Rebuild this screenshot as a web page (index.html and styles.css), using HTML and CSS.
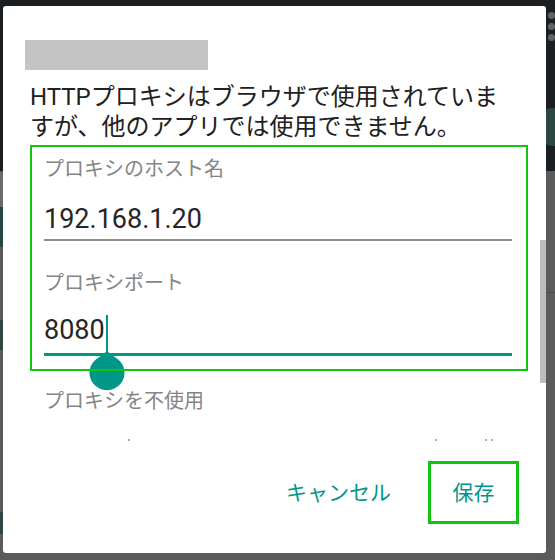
FILE: index.html
```html
<!DOCTYPE html>
<html lang="ja">
<head>
<meta charset="utf-8">
<title>プロキシ</title>
<link rel="stylesheet" href="styles.css">
</head>
<body>
<div class="screen">
  <div class="bg-dots"><span></span><span></span><span></span></div>
  <div class="bg-fab"></div>
  <div class="bg-left-a"></div>
  <div class="bg-left-b"></div>
  <div class="bg-left-c"></div>
  <div class="bg-left-d"></div>
  <div class="bg-line"></div>

  <div class="dialog">
    <div class="title-ph"></div>
    <p class="message">HTTPプロキシはブラウザで使用されていますが、他のアプリでは使用できません。</p>

    <div class="form-box">
      <div class="field">
        <div class="label">プロキシのホスト名</div>
        <div class="value host">192.168.1.20</div>
      </div>
      <div class="field port">
        <div class="label">プロキシポート</div>
        <div class="value focused">8080</div>
      </div>
      <div class="cursor"></div>
      <svg class="handle" viewBox="0 0 36 40" width="36" height="40">
        <path d="M18 0 L26 6.2 A17.5 17.5 0 1 1 10 6.2 Z" fill="#009688"/>
      </svg>
    </div>

    <div class="label bypass">プロキシを不使用</div>
    <div class="cut-row"><i class="d1"></i><i class="d2"></i><i class="d3"></i><i class="d4"></i></div>

    <div class="actions">
      <span class="btn cancel">キャンセル</span>
      <span class="btn save">保存</span>
    </div>
    <div class="scrollbar"></div>
  </div>
</div>
</body>
</html>
```

FILE: styles.css
```css
html, body {
  margin: 0;
  padding: 0;
}
body {
  font-family: Roboto, "Noto Sans CJK JP", sans-serif;
  background: #5a5a5a;
}
.screen {
  position: relative;
  width: 555px;
  height: 560px;
  overflow: hidden;
  background: linear-gradient(#1b1f22 0, #1b1f22 171px, #5b5b5b 171px);
  display: flex;
  flex-direction: column;
}
.bg-dots {
  position: absolute;
  left: 548px;
  top: 12px;
  display: flex;
  flex-direction: column;
  gap: 4px;
}
.bg-dots span {
  width: 7px;
  height: 7px;
  border-radius: 50%;
  background: #5f6366;
}
.bg-fab {
  position: absolute;
  left: 534px;
  top: 108px;
  width: 38px;
  height: 38px;
  border-radius: 50%;
  background: #2c4643;
}
.bg-left-a {
  position: absolute;
  left: 0;
  top: 172px;
  width: 3px;
  height: 40px;
  background: #6a6a6a;
}
.bg-left-b {
  position: absolute;
  left: 0;
  top: 207px;
  width: 3px;
  height: 40px;
  background: #264543;
}
.bg-left-c {
  position: absolute;
  left: 0;
  top: 320px;
  width: 3px;
  height: 30px;
  background: #2f4644;
}
.bg-left-d {
  position: absolute;
  left: 0;
  top: 512px;
  width: 3px;
  height: 22px;
  background: #2f4644;
}
.bg-line {
  position: absolute;
  left: 546px;
  top: 292px;
  width: 9px;
  height: 1px;
  background: #4a4a4a;
}

.dialog {
  position: relative;
  margin: 6px 0 0 3px;
  width: 543px;
  height: 547px;
  background: #ffffff;
  border-radius: 3px;
  box-sizing: border-box;
  padding-top: 34px;
  display: flex;
  flex-direction: column;
}
.title-ph {
  margin-left: 22px;
  width: 183px;
  height: 30px;
  background: #c4c4c4;
}
.message {
  margin: 12px 0 0 27px;
  width: 480px;
  font-size: 24px;
  line-height: 30px;
  color: #212121;
}
.form-box {
  position: relative;
  margin: 3px 0 0 27px;
  width: 498px;
  height: 226px;
  box-sizing: border-box;
  padding: 10px 16px 0 14px;
}
.form-box::after {
  content: "";
  position: absolute;
  inset: 0;
  border: 2px solid #12c312;
  z-index: 3;
  pointer-events: none;
}
.label {
  font-size: 20px;
  line-height: 28px;
  color: #858585;
}
.value {
  margin-top: 18px;
  font-size: 27px;
  line-height: 36px;
  color: #262626;
  padding-bottom: 2px;
  border-bottom: 2px solid #8e8e8e;
}
.port {
  margin-top: 28px;
}
.port .value {
  margin-top: 15px;
  padding-bottom: 5px;
  border-bottom: 3px solid #009688;
}
.cursor {
  position: absolute;
  left: 76px;
  top: 170px;
  width: 2px;
  height: 40px;
  background: #009688;
}
.handle {
  position: absolute;
  left: 59px;
  top: 206px;
  z-index: 2;
}
.bypass {
  margin: 16px 0 0 41px;
}
.cut-row {
  position: relative;
  height: 2px;
  margin-top: 24px;
}
.cut-row i {
  position: absolute;
  top: 0;
  width: 2px;
  height: 2px;
  background: #b0b0b0;
}
.cut-row .d1 { left: 125px; }
.cut-row .d2 { left: 432px; }
.cut-row .d3 { left: 482px; }
.cut-row .d4 { left: 488px; }

.actions {
  margin-top: 20px;
  margin-right: 27px;
  display: flex;
  justify-content: flex-end;
  align-items: center;
  gap: 37px;
}
.btn {
  font-size: 21px;
  line-height: 28px;
  color: #009688;
}
.save {
  width: 91px;
  height: 63px;
  box-sizing: border-box;
  border: 3px solid #12c312;
  display: flex;
  align-items: center;
  justify-content: center;
}
.scrollbar {
  position: absolute;
  left: 537px;
  top: 234px;
  width: 6px;
  height: 143px;
  background: #bdbdbd;
}
```
